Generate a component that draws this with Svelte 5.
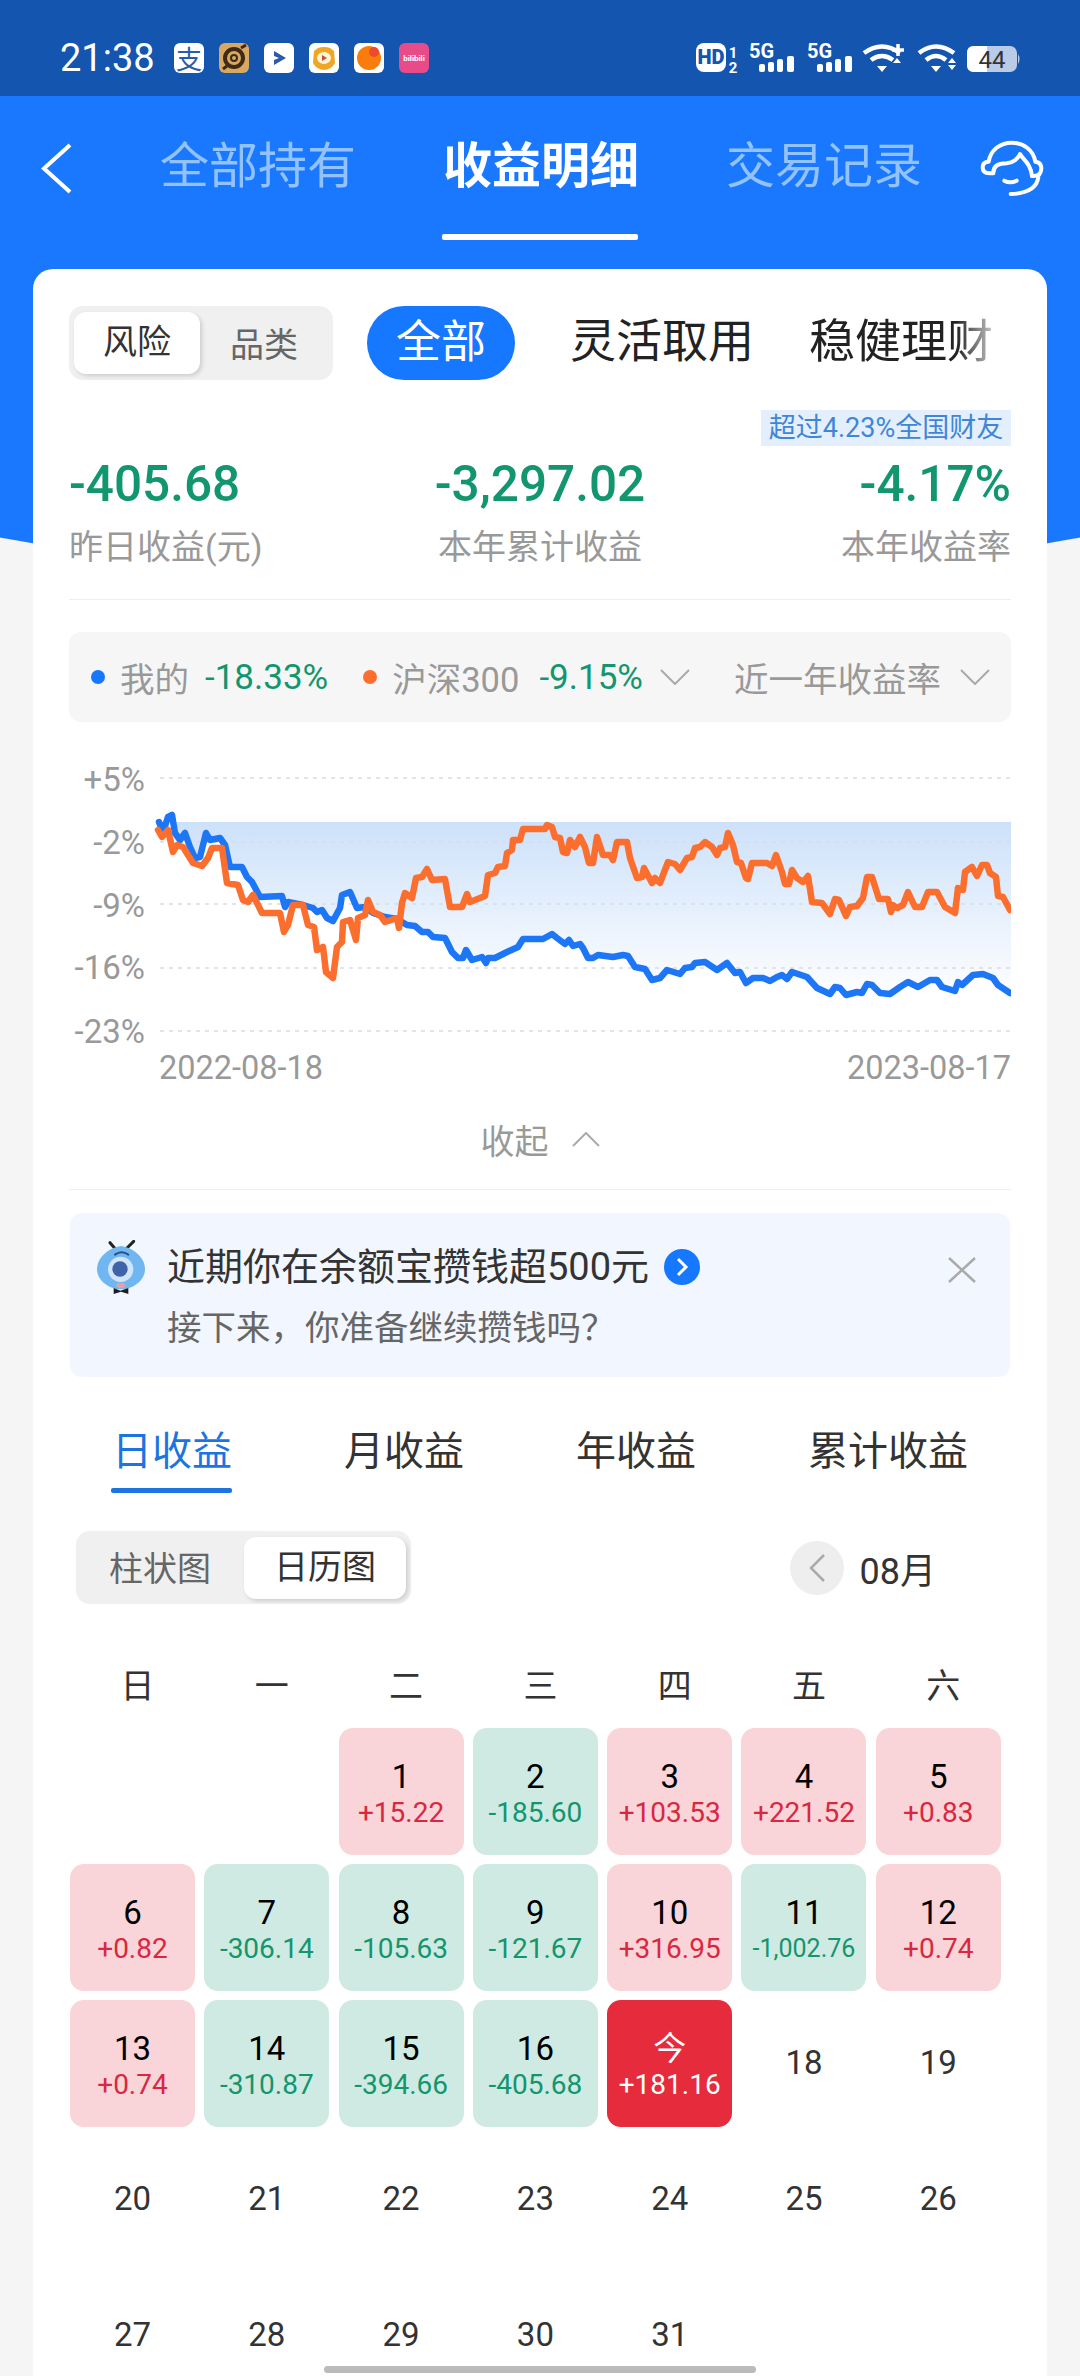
<script>
	const blue = [159,822,163,832,168,817,172,815,175,833,180,840,185,833,190,847,195,858,200,857,206,833,210,840,220,838,225,845,230,867,242,867,247,877,252,882,260,897,282,896,285,907,288,902,303,905,313,908,317,912,322,910,327,918,333,921,340,908,342,895,350,892,357,908,365,907,373,913,385,917,397,919,407,925,415,926,422,932,428,932,433,937,445,938,452,952,458,958,463,958,466,950,472,960,482,957,486,963,488,958,495,958,507,952,518,947,523,939,543,939,552,934,557,938,565,944,569,940,573,946,580,944,583,948,588,958,593,958,598,955,613,957,623,955,628,956,635,967,645,969,652,980,660,978,667,970,680,974,685,968,692,967,695,963,705,962,717,970,727,963,735,973,740,972,746,983,753,978,763,978,770,981,777,977,782,975,787,979,792,972,807,977,817,988,830,994,835,987,840,988,846,995,857,992,862,993,867,984,872,985,880,993,890,994,900,987,908,982,918,987,930,980,937,980,942,987,955,991,958,982,962,985,973,975,983,974,993,978,998,985,1010,993];
	const orange = [158,830,162,837,168,830,173,852,177,845,183,847,193,863,202,866,208,858,212,848,222,848,227,883,238,885,243,900,248,902,253,895,262,913,280,913,284,932,288,925,293,905,303,905,308,925,314,927,317,950,323,947,326,972,333,978,337,947,342,942,343,922,350,920,356,940,358,918,365,915,368,900,373,912,380,915,385,922,397,918,399,928,402,903,405,893,412,898,416,878,422,877,427,869,432,880,445,879,450,907,462,907,467,894,470,902,485,896,488,875,495,873,498,867,505,866,507,853,512,850,513,840,520,840,523,829,545,829,547,825,552,827,555,837,560,838,563,852,567,853,570,840,575,847,580,837,585,847,589,863,593,863,597,837,603,855,610,855,613,860,617,842,627,842,630,858,637,878,642,877,644,868,652,883,655,878,660,883,668,862,675,864,680,870,687,858,692,857,695,848,700,847,705,842,712,847,717,855,720,848,725,847,728,833,733,845,737,862,741,863,746,878,748,879,752,863,767,863,772,866,776,855,782,872,785,884,789,884,792,870,797,878,803,882,808,876,812,902,822,903,830,914,835,899,839,900,846,916,850,907,857,906,863,898,867,877,872,877,879,899,888,899,891,912,893,905,897,908,903,905,908,892,915,907,922,907,928,892,937,892,945,907,955,913,958,888,963,890,965,872,972,867,977,876,982,865,987,865,990,873,996,877,998,896,1003,897,1010,910];

	function pts(a) {
		let s = [];
		for (let i = 0; i < a.length; i += 2) s.push(a[i] + ',' + a[i + 1]);
		return s.join(' ');
	}
	const areaPts = '175,822 ' + pts(blue.slice(8)) + ' 1012,993 1012,822';

	const gridY = [778, 842, 904, 968, 1031];
	const yLabels = [['+5%', 780], ['-2%', 843], ['-9%', 906], ['-16%', 968], ['-23%', 1032]];

	const week = ['日', '一', '二', '三', '四', '五', '六'];
	// blank cells first, then the days of the month
	const days = [
		{}, {},
		{ n: 1, v: '+15.22' }, { n: 2, v: '-185.60' }, { n: 3, v: '+103.53' }, { n: 4, v: '+221.52' }, { n: 5, v: '+0.83' },
		{ n: 6, v: '+0.82' }, { n: 7, v: '-306.14' }, { n: 8, v: '-105.63' }, { n: 9, v: '-121.67' }, { n: 10, v: '+316.95' }, { n: 11, v: '-1,002.76' }, { n: 12, v: '+0.74' },
		{ n: 13, v: '+0.74' }, { n: 14, v: '-310.87' }, { n: 15, v: '-394.66' }, { n: 16, v: '-405.68' }, { n: '今', v: '+181.16', today: true }, { n: 18 }, { n: 19 },
		{ n: 20 }, { n: 21 }, { n: 22 }, { n: 23 }, { n: 24 }, { n: 25 }, { n: 26 },
		{ n: 27 }, { n: 28 }, { n: 29 }, { n: 30 }, { n: 31 }
	];
	function cellClass(d) {
		if (d.today) return 'cell today';
		if (!d.v) return 'cell plain';
		return d.v[0] === '+' ? 'cell up' : 'cell down';
	}
</script>

<div class="page">
	<div class="blue-bg"></div>

	<div class="status">
		<span class="time">21:38</span>
		<div class="apps">
			<div class="app"><span class="zhi">支</span></div>
			<div class="app gold">
				<svg viewBox="0 0 30 30" width="30" height="30"><circle cx="15" cy="15" r="9" fill="none" stroke="#3d2a18" stroke-width="4"/><circle cx="15" cy="15" r="3" fill="none" stroke="#3d2a18" stroke-width="2"/><path d="M22 5 L27 2 M4 26 L8 23" stroke="#3d2a18" stroke-width="3"/></svg>
			</div>
			<div class="app">
				<svg viewBox="0 0 30 30" width="30" height="30"><path d="M10 8 L22 15 L10 22 V17 L15 15 L10 13 Z" fill="#2a5aa8"/></svg>
			</div>
			<div class="app">
				<svg viewBox="0 0 30 30" width="30" height="30"><path d="M5 8 L9 5 Q15 3 21 5 L25 8 L26 20 Q22 27 15 27 Q8 27 4 20 Z" fill="#eea624"/><ellipse cx="15" cy="15" rx="7" ry="6" fill="#fff3d8"/><path d="M13 12 L18 15 L13 18 Z" fill="#c8502a"/></svg>
			</div>
			<div class="app">
				<svg viewBox="0 0 30 30" width="30" height="30"><circle cx="15" cy="15" r="12" fill="#f97c0c"/><circle cx="20" cy="9" r="5" fill="#ee4a2c"/></svg>
			</div>
			<div class="app pink"><span>bilibili</span></div>
		</div>
		<svg class="sys" viewBox="690 40 335 36" width="335" height="36">
			<rect x="696" y="43" width="30" height="29" rx="8" fill="#fff"/>
			<text x="711" y="64" class="hd">HD</text>
			<text x="733" y="58" class="sim">1</text>
			<text x="733" y="73" class="sim">2</text>
			<text x="749" y="58" class="fiveg">5G</text>
			<rect x="759" y="64" width="6" height="8" rx="2" fill="#fff"/><rect x="768" y="62" width="6" height="10" rx="2" fill="#fff"/><rect x="777" y="59" width="6" height="13" rx="2" fill="#fff"/><rect x="787" y="56" width="7" height="16" rx="2" fill="#fff"/>
			<text x="807" y="58" class="fiveg">5G</text>
			<rect x="817" y="64" width="6" height="8" rx="2" fill="#fff"/><rect x="826" y="62" width="6" height="10" rx="2" fill="#fff"/><rect x="835" y="59" width="6" height="13" rx="2" fill="#fff"/><rect x="845" y="56" width="7" height="16" rx="2" fill="#fff"/>
			<g fill="none" stroke="#fff" stroke-width="4.5">
				<path d="M864 53 Q882 40 900 53"/>
				<path d="M871 60 Q882 52 893 60"/>
				<path d="M919 53 Q936 40 954 53"/>
				<path d="M926 60 Q936 52 946 60"/>
			</g>
			<path d="M877 66 H887 L882 72 Z M931 66 H941 L936 72 Z" fill="#fff"/>
			<path d="M892 50 H904 M898 44 V56" stroke="#fff" stroke-width="3.5" fill="none"/>
			<path d="M893 63 L897 58 L901 63 Z M948 63 L952 58 L956 63 Z M948 65 H956 L952 70 Z" fill="#fff"/>
			<rect x="967" y="46" width="50" height="26" rx="7" fill="#b9cbe6"/>
			<path d="M974 46 H987 V72 H974 Q967 72 967 65 V53 Q967 46 974 46 Z" fill="#fff"/>
			<path d="M1018 54 Q1021 59 1018 64 Z" fill="#b9cbe6"/>
			<text x="992" y="68" class="batt">44</text>
		</svg>
	</div>

	<div class="nav">
		<svg class="back" viewBox="0 0 31 51" width="31" height="51"><path d="M29 2 L3 25.5 L29 49" fill="none" stroke="#fff" stroke-width="4"/></svg>
		<div class="nav-tab">全部持有</div>
		<div class="nav-tab on">收益明细<div class="nav-line"></div></div>
		<div class="nav-tab">交易记录</div>
		<svg class="headset" viewBox="0 0 240 225" width="80" height="75" fill="none" stroke="#fff" stroke-width="12" stroke-linecap="round" stroke-linejoin="round">
			<path d="M70 130 H58 Q38 130 38 112 Q38 95 56 95 C62 60 90 38 125 38 C160 38 190 60 196 95 Q214 97 214 115 Q214 138 192 138 H186"/>
			<path d="M70 128 C70 106 90 100 110 100 C130 98 145 85 150 72 C160 90 182 100 186 138"/>
			<path d="M103 152 Q120 162 140 152"/>
			<path d="M205 142 Q198 190 122 192"/>
		</svg>
	</div>

	<div class="card">
		<div class="filters">
			<div class="seg">
				<div class="knob">风险</div>
				<div class="seg-off">品类</div>
			</div>
			<div class="pill">全部</div>
			<div class="filter first">灵活取用</div>
			<div class="filter last">稳健理财</div>
		</div>

		<div class="badge-row"><span class="badge">超过4.23%全国财友</span></div>

		<div class="stats">
			<div>
				<div class="val">-405.68</div>
				<div class="lab">昨日收益(元)</div>
			</div>
			<div class="mid">
				<div class="val">-3,297.02</div>
				<div class="lab">本年累计收益</div>
			</div>
			<div class="end">
				<div class="val">-4.17%</div>
				<div class="lab">本年收益率</div>
			</div>
		</div>

		<div class="legend">
			<i class="dot b"></i><span class="lg">我的</span><span class="pct p1">-18.33%</span>
			<i class="dot o"></i><span class="lg">沪深300</span><span class="pct p2">-9.15%</span>
			<svg class="chev c1" viewBox="0 0 30 16" width="30" height="16"><path d="M1 1 L15 15 L29 1" fill="none" stroke="#aaa" stroke-width="2"/></svg>
			<span class="lg range">近一年收益率</span>
			<svg class="chev c2" viewBox="0 0 30 16" width="30" height="16"><path d="M1 1 L15 15 L29 1" fill="none" stroke="#aaa" stroke-width="2"/></svg>
		</div>

		<svg class="chart" viewBox="69 760 942 330" width="942" height="330">
			<defs>
				<linearGradient id="fade" gradientUnits="userSpaceOnUse" x1="0" y1="822" x2="0" y2="1000">
					<stop offset="0" stop-color="#cde1fa"/>
					<stop offset="1" stop-color="#ffffff"/>
				</linearGradient>
			</defs>
			<polygon points={areaPts} fill="url(#fade)"/>
			{#each gridY as y}
				<line x1="160" x2="1011" y1={y} y2={y} stroke="#d8dde4" stroke-width="1.5" stroke-dasharray="4 5"/>
			{/each}
			{#each yLabels as l}
				<text x="145" y={l[1] + 11} text-anchor="end" class="axis">{l[0]}</text>
			{/each}
			<polyline points={pts(blue)} fill="none" stroke="#1d76f5" stroke-width="6.5" stroke-linejoin="round" stroke-linecap="round"/>
			<polyline points={pts(orange)} fill="none" stroke="#fb6e2e" stroke-width="6.5" stroke-linejoin="round" stroke-linecap="round"/>
			<text x="159" y="1079" class="date">2022-08-18</text>
			<text x="1011" y="1079" text-anchor="end" class="date">2023-08-17</text>
		</svg>

		<div class="collapse">
			<span>收起</span>
			<svg viewBox="0 0 28 15" width="28" height="15"><path d="M1 14 L14 1 L27 14" fill="none" stroke="#aaa" stroke-width="2"/></svg>
		</div>

		<div class="banner">
			<svg class="mascot" viewBox="33 30 147 165" width="49" height="55">
				<path d="M75 38 L92 58 M146 34 L126 54" stroke="#222" stroke-width="9" stroke-linecap="round"/>
				<path d="M108 48 C150 55 180 85 180 118 C180 150 145 178 108 178 C71 178 36 150 36 118 C36 85 66 55 108 48 Z" fill="#70b7f1"/>
				<path d="M90 74 Q110 60 130 74" fill="none" stroke="#2b4f8a" stroke-width="6" stroke-linecap="round"/>
				<circle cx="107" cy="118" r="38" fill="#cfe5f9"/>
				<circle cx="105" cy="117" r="23" fill="#4064a8"/>
				<ellipse cx="108" cy="166" rx="14" ry="8" fill="#e8a0a8"/>
				<path d="M86 174 L106 182 L130 174 V192 L108 185 L86 192 Z" fill="#1e1e1e"/>
			</svg>
			<div class="msg">
				<div class="msg1">
					<span>近期你在余额宝攒钱超500元</span>
					<svg viewBox="0 0 36 36" width="36" height="36"><circle cx="18" cy="18" r="18" fill="#1677ff"/><path d="M14 10 L22 18 L14 26" fill="none" stroke="#fff" stroke-width="3"/></svg>
				</div>
				<div class="msg2">接下来，你准备继续攒钱吗？</div>
			</div>
			<svg class="close" viewBox="0 0 28 26" width="28" height="26"><path d="M1 1 L27 25 M27 1 L1 25" stroke="#aaa" stroke-width="2.5"/></svg>
		</div>

		<div class="tabs">
			<div class="tab on">日收益<div class="tab-line"></div></div>
			<div class="tab">月收益</div>
			<div class="tab">年收益</div>
			<div class="tab">累计收益</div>
		</div>

		<div class="tools">
			<div class="seg2">
				<div class="seg2-off">柱状图</div>
				<div class="knob2">日历图</div>
			</div>
			<div class="month">
				<div class="prev"><svg viewBox="0 0 16 28" width="16" height="28"><path d="M15 1 L2 14 L15 27" fill="none" stroke="#aaa" stroke-width="2.5"/></svg></div>
				<span>08月</span>
			</div>
		</div>

		<div class="week">
			{#each week as w}<div>{w}</div>{/each}
		</div>

		<div class="cal">
			{#each days as d}
				<div class={cellClass(d)}>
					{#if d.n}<div class="num">{d.n}</div>{/if}
					{#if d.v}<div class="amt" class:tight={d.v.length > 8}>{d.v}</div>{/if}
				</div>
			{/each}
		</div>
	</div>

	<div class="home"></div>
</div>

<style>
	:global(body) {
		margin: 0;
		background: #f5f5f5;
	}
	.page {
		position: relative;
		width: 1080px;
		height: 2376px;
		overflow: hidden;
		background: #f5f5f5;
		font-family: Roboto, "Noto Sans CJK SC", sans-serif;
	}
	.blue-bg {
		position: absolute;
		left: -300px;
		top: 0;
		width: 1680px;
		height: 582px;
		background: #1a78ff;
		border-radius: 0 0 840px 840px / 0 0 190px 190px;
	}

	/* status bar */
	.status {
		position: relative;
		height: 96px;
		background: #1455b0;
		display: flex;
		align-items: center;
		padding: 20px 0 0 60px;
		box-sizing: border-box;
		color: #fff;
		font-family: Roboto, sans-serif;
	}
	.time {
		font-size: 38px;
		line-height: 44px;
		width: 114px;
	}
	.apps {
		display: flex;
		gap: 15px;
	}
	.app {
		width: 30px;
		height: 30px;
		background: #fff;
		border-radius: 6px;
		display: flex;
		align-items: center;
		justify-content: center;
	}
	.zhi {
		font-family: "Noto Sans CJK SC", sans-serif;
		font-size: 26px;
		line-height: 30px;
		color: #2a5caa;
	}
	.gold {
		background: #d9a860;
	}
	.pink {
		background: #e84c88;
		color: #fff;
		font-size: 8px;
		font-weight: 700;
	}
	.sys {
		position: absolute;
		left: 690px;
		top: 40px;
	}
	.hd {
		font-size: 20px;
		font-weight: 900;
		fill: #1455b0;
		text-anchor: middle;
	}
	.sim {
		font-size: 15px;
		font-weight: 700;
		fill: #fff;
		text-anchor: middle;
	}
	.fiveg {
		font-size: 20px;
		font-weight: 700;
		fill: #fff;
	}
	.batt {
		font-size: 24px;
		fill: #333;
		text-anchor: middle;
	}

	/* top nav */
	.nav {
		position: relative;
		height: 173px;
		box-sizing: border-box;
		padding: 46px 0 0 41px;
		display: flex;
		align-items: flex-start;
	}
	.back {
		margin-right: 88px;
		margin-top: 1px;
	}
	.nav-tab {
		width: 193px;
		margin-right: 90px;
		font-size: 49px;
		line-height: 50px;
		color: #92c2ff;
		white-space: nowrap;
	}
	.nav-tab.on {
		color: #fff;
		font-weight: 700;
	}
	.nav-line {
		width: 196px;
		height: 6px;
		margin: 42px 0 0 -1px;
		background: #fff;
		border-radius: 2px;
	}
	.headset {
		margin-left: -39px;
		margin-top: -12px;
	}

	/* card */
	.card {
		position: relative;
		margin: 0 33px;
		padding: 37px 36px 0;
		height: 2200px;
		box-sizing: border-box;
		background: #fff;
		border-radius: 20px 20px 0 0;
	}
	.filters {
		display: flex;
		align-items: center;
		height: 74px;
		overflow: hidden;
	}
	.seg {
		width: 264px;
		height: 74px;
		box-sizing: border-box;
		padding: 6px 5px;
		background: #f0f0f0;
		border-radius: 14px;
		display: flex;
		flex-shrink: 0;
		align-items: center;
		font-size: 34px;
	}
	.knob {
		width: 126px;
		height: 62px;
		line-height: 60px;
		text-align: center;
		background: #fff;
		color: #333;
		border-radius: 12px;
		box-shadow: 2px 2px 4px rgba(0, 0, 0, 0.15);
	}
	.seg-off {
		flex: 1;
		text-align: center;
		color: #666;
		margin-top: -2px;
	}
	.pill {
		width: 148px;
		height: 74px;
		line-height: 74px;
		margin-left: 34px;
		text-align: center;
		flex-shrink: 0;
		background: #1677ff;
		color: #fff;
		border-radius: 37px;
		font-size: 45px;
	}
	.filter {
		font-size: 46px;
		line-height: 60px;
		margin-top: -4px;
		color: #222;
		white-space: nowrap;
		flex-shrink: 0;
	}
	.first {
		margin-left: 55px;
	}
	.last {
		margin-left: 55px;
		-webkit-mask-image: linear-gradient(to right, #000 80%, rgba(0, 0, 0, 0.25) 100%);
		mask-image: linear-gradient(to right, #000 80%, rgba(0, 0, 0, 0.25) 100%);
	}
	.badge-row {
		display: flex;
		justify-content: flex-end;
		margin-top: 30px;
		height: 36px;
	}
	.badge {
		width: 250px;
		height: 36px;
		line-height: 36px;
		text-align: center;
		font-size: 27px;
		white-space: nowrap;
		background: #e3effc;
		color: #3f86d8;
	}
	.stats {
		display: grid;
		grid-template-columns: 1fr auto 1fr;
		margin-top: 13px;
		padding-bottom: 28px;
		border-bottom: 1px solid #eee;
	}
	.mid {
		text-align: center;
	}
	.end {
		text-align: right;
	}
	.val {
		font-size: 49.5px;
		line-height: 50px;
		font-weight: 500;
		color: #12966f;
		white-space: nowrap;
	}
	.lab {
		font-size: 34px;
		line-height: 48px;
		margin-top: 14px;
		color: #999;
		white-space: nowrap;
	}

	/* compare legend */
	.legend {
		display: flex;
		align-items: center;
		height: 90px;
		margin-top: 32px;
		padding-left: 22px;
		background: #f6f6f6;
		border-radius: 12px;
		white-space: nowrap;
	}
	.dot {
		width: 14px;
		height: 14px;
		border-radius: 50%;
		flex-shrink: 0;
	}
	.dot.b {
		background: #1677ff;
	}
	.dot.o {
		background: #fb6e2e;
		margin-left: 35px;
	}
	.lg {
		font-size: 34.5px;
		color: #999;
		margin-left: 15px;
	}
	.pct {
		font-size: 35px;
		color: #12966f;
		margin-left: 16px;
	}
	.pct.p2 {
		margin-left: 20px;
	}
	.chev.c1 {
		margin-left: 17px;
	}
	.lg.range {
		margin-left: 44px;
	}
	.chev.c2 {
		margin-left: 19px;
	}

	.chart {
		display: block;
		margin-top: 38px;
	}
	.axis {
		font-size: 33px;
		fill: #999;
	}
	.date {
		font-size: 32.5px;
		fill: #999;
	}
	.collapse {
		height: 99px;
		display: flex;
		align-items: center;
		justify-content: center;
		gap: 23px;
		border-bottom: 1px solid #eee;
		font-size: 34px;
		color: #999;
	}

	/* banner */
	.banner {
		display: flex;
		align-items: flex-start;
		height: 164px;
		margin: 23px 1px 0;
		background: #f2f6ff;
		border-radius: 12px;
		padding-left: 26px;
	}
	.mascot {
		margin-top: 27px;
		margin-right: 22px;
		flex-shrink: 0;
	}
	.msg {
		padding-top: 30px;
	}
	.msg1 {
		display: flex;
		align-items: center;
		gap: 15px;
		font-size: 38px;
		line-height: 48px;
		color: #333;
		white-space: nowrap;
	}
	.msg2 {
		margin-top: 13px;
		font-size: 34.5px;
		line-height: 48px;
		color: #666;
		white-space: nowrap;
	}
	.close {
		margin: 44px 34px 0 auto;
	}

	/* tabs */
	.tabs {
		display: flex;
		gap: 112px;
		margin-top: 50px;
		padding-left: 43px;
		font-size: 40px;
		line-height: 50px;
		height: 66px;
		color: #333;
	}
	.tab.on {
		color: #1d74e0;
	}
	.tab-line {
		height: 5px;
		margin: 11px 0 0 -1px;
		background: #1d74e0;
		border-radius: 2px;
	}
	.tools {
		display: flex;
		justify-content: space-between;
		align-items: center;
		margin-top: 38px;
		margin-left: 7px;
		padding-right: 75px;
		height: 73px;
	}
	.seg2 {
		width: 335px;
		height: 73px;
		box-sizing: border-box;
		padding: 6px 5px 5px 0;
		background: #f0f0f0;
		border-radius: 14px;
		display: flex;
		align-items: center;
		font-size: 34px;
	}
	.seg2-off {
		width: 168px;
		text-align: center;
		color: #666;
		margin-top: -3px;
	}
	.knob2 {
		width: 162px;
		height: 62px;
		line-height: 60px;
		text-align: center;
		color: #333;
		background: #fff;
		border-radius: 12px;
		box-shadow: 2px 2px 4px rgba(0, 0, 0, 0.15);
	}
	.month {
		display: flex;
		align-items: center;
		gap: 16px;
		font-size: 36px;
		color: #333;
	}
	.prev {
		width: 54px;
		height: 54px;
		background: #eee;
		border-radius: 50%;
		display: flex;
		align-items: center;
		justify-content: center;
	}

	/* calendar */
	.week {
		display: grid;
		grid-template-columns: repeat(7, 125px);
		column-gap: 9.3px;
		margin-top: 57px;
		margin-left: 6px;
		font-size: 34px;
		line-height: 50px;
		text-align: center;
		color: #333;
	}
	.cal {
		display: grid;
		grid-template-columns: repeat(7, 125px);
		grid-auto-rows: 127px;
		gap: 9px 9.3px;
		margin-top: 17px;
		margin-left: 1px;
		text-align: center;
	}
	.cell {
		border-radius: 14px;
		padding-top: 30px;
		box-sizing: border-box;
		color: #000;
	}
	.num {
		font-size: 33px;
		line-height: 38px;
	}
	.amt {
		font-size: 28px;
		line-height: 34px;
		white-space: nowrap;
	}
	.amt.tight {
		font-size: 25px;
	}
	.up {
		background: #f9d4d8;
	}
	.up .amt {
		color: #d8283f;
	}
	.down {
		background: #cfeae2;
	}
	.down .amt {
		color: #14956e;
	}
	.today {
		background: #e62b3c;
		color: #fff;
	}
	.plain {
		padding-top: 44px;
		color: #333;
	}
	.home {
		position: absolute;
		left: 324px;
		top: 2366px;
		width: 432px;
		height: 7px;
		background: #bbb;
		border-radius: 4px;
	}
</style>
